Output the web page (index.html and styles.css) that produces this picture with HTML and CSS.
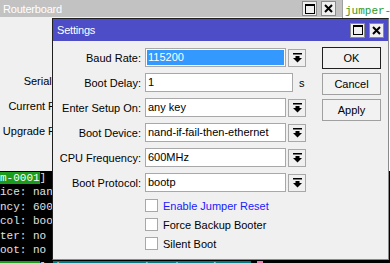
FILE: index.html
```html
<!DOCTYPE html>
<html lang="en">
<head>
  <meta charset="UTF-8">
  <meta name="viewport" content="width=device-width, initial-scale=1.0">
  <title>Settings</title>
  <link rel="stylesheet" href="styles.css">
</head>
<body>

  <div class="desktop">
    <div class="routerboard">
      <div class="titlebar inactive">
        <span class="title">Routerboard</span>
        <span class="title-buttons">
          <span class="win-button">
            <svg width="10" height="10" viewBox="0 0 10 10"><rect x="0.5" y="0.5" width="9" height="9" fill="none" stroke="#000"/><rect x="0" y="0" width="10" height="2"/></svg>
          </span>
          <span class="win-button">
            <svg width="9" height="9" viewBox="0 0 9 9"><path d="M1 1L8 8M8 1L1 8" stroke="#000" stroke-width="2"/></svg>
          </span>
        </span>
      </div>
      <div class="rb-body">
        <p class="rb-label">Serial Number:</p>
        <p class="rb-label">Current Firmware:</p>
        <p class="rb-label">Upgrade Firmware:</p>
      </div>
    </div>

    <div class="side-terminal">jumper-reset</div>

    <div class="terminal">
      <p class="line"><span class="prompt">m-0001</span>] /system routerboard settings print</p>
      <p class="line">ice: nand-if-fail-then-ethernet</p>
      <p class="line">ncy: 600MHz</p>
      <p class="line">col: bootp</p>
      <p class="line">ter: no</p>
      <p class="line">oot: no</p>
      <p class="line last"><span class="prompt">m-0001</span>] <span class="command">/system routerboard settings&gt; </span><span class="cursor">&nbsp;</span></p>
    </div>
  </div>

  <div class="dialog">
    <div class="titlebar active">
      <span class="title">Settings</span>
      <span class="title-buttons">
        <span class="win-button">
          <svg width="10" height="10" viewBox="0 0 10 10"><rect x="0.5" y="0.5" width="9" height="9" fill="none" stroke="#000"/><rect x="0" y="0" width="10" height="2"/></svg>
        </span>
        <span class="win-button">
          <svg width="9" height="9" viewBox="0 0 9 9"><path d="M1 1L8 8M8 1L1 8" stroke="#000" stroke-width="2"/></svg>
        </span>
      </span>
    </div>

    <div class="dialog-body">
      <div class="form">
        <div class="form-rows">
          <div class="form-row">
            <span class="label">Baud Rate:</span>
            <span class="field selected">115200</span>
            <span class="drop-button">
              <svg width="9" height="10" viewBox="0 0 9 10"><rect x="0" y="0" width="9" height="1.5"/><rect x="2.5" y="3" width="4" height="2.5"/><path d="M0 5h9L4.5 9.5z"/></svg>
            </span>
          </div>
          <div class="form-row">
            <span class="label">Boot Delay:</span>
            <span class="field wide">1</span>
            <span class="unit">s</span>
          </div>
          <div class="form-row">
            <span class="label">Enter Setup On:</span>
            <span class="field">any key</span>
            <span class="drop-button">
              <svg width="9" height="10" viewBox="0 0 9 10"><rect x="0" y="0" width="9" height="1.5"/><rect x="2.5" y="3" width="4" height="2.5"/><path d="M0 5h9L4.5 9.5z"/></svg>
            </span>
          </div>
          <div class="form-row">
            <span class="label">Boot Device:</span>
            <span class="field">nand-if-fail-then-ethernet</span>
            <span class="drop-button">
              <svg width="9" height="10" viewBox="0 0 9 10"><rect x="0" y="0" width="9" height="1.5"/><rect x="2.5" y="3" width="4" height="2.5"/><path d="M0 5h9L4.5 9.5z"/></svg>
            </span>
          </div>
          <div class="form-row">
            <span class="label">CPU Frequency:</span>
            <span class="field">600MHz</span>
            <span class="drop-button">
              <svg width="9" height="10" viewBox="0 0 9 10"><rect x="0" y="0" width="9" height="1.5"/><rect x="2.5" y="3" width="4" height="2.5"/><path d="M0 5h9L4.5 9.5z"/></svg>
            </span>
          </div>
          <div class="form-row">
            <span class="label">Boot Protocol:</span>
            <span class="field">bootp</span>
            <span class="drop-button">
              <svg width="9" height="10" viewBox="0 0 9 10"><rect x="0" y="0" width="9" height="1.5"/><rect x="2.5" y="3" width="4" height="2.5"/><path d="M0 5h9L4.5 9.5z"/></svg>
            </span>
          </div>
        </div>

        <div class="checks">
          <label class="check"><span class="box"></span><span class="check-text link">Enable Jumper Reset</span></label>
          <label class="check"><span class="box"></span><span class="check-text">Force Backup Booter</span></label>
          <label class="check"><span class="box"></span><span class="check-text">Silent Boot</span></label>
        </div>
      </div>

      <div class="buttons">
        <button class="dialog-button default">OK</button>
        <button class="dialog-button">Cancel</button>
        <button class="dialog-button">Apply</button>
      </div>
    </div>
  </div>

</body>
</html>
```

FILE: styles.css
```css
body {
  margin: 0;
  width: 390px;
  height: 263px;
  overflow: hidden;
  position: relative;
  font-family: "Liberation Sans", Arial, sans-serif;
  font-size: 11px;
  color: #000;
  background-color: #000;
}

p {
  margin: 0;
}

.desktop {
  display: grid;
  grid-template-columns: 343px 1fr;
  grid-template-rows: 171px 1fr;
  width: 390px;
  height: 263px;
}

/* window title bars */

.titlebar {
  display: flex;
  align-items: center;
  justify-content: space-between;
  color: white;
}

.titlebar.inactive {
  height: 17px;
  background-color: #c2c2c2;
  padding: 0 6px 0 3px;
}

.titlebar.active {
  height: 22px;
  background-color: #4d4dc8;
  padding: 0 4px 0 4px;
}

.title {
  font-size: 11px;
  letter-spacing: -0.2px;
}

.title-buttons {
  display: flex;
  gap: 4px;
}

.win-button {
  display: flex;
  align-items: center;
  justify-content: center;
  width: 13px;
  height: 13px;
  background-color: #f0f0f0;
  border: 1px solid #8c8c8c;
}

/* background windows */

.routerboard {
  background-color: #f0f0f0;
  border-right: 1px solid #a0a0a0;
}

.rb-body {
  padding-top: 52px;
}

.rb-label {
  width: 97px;
  height: 25px;
  line-height: 25px;
  text-align: right;
  white-space: nowrap;
}

.side-terminal {
  background-color: white;
  color: #2a9a2a;
  font-family: "Liberation Mono", monospace;
  font-size: 11px;
  padding: 5px 0 0 2px;
  white-space: nowrap;
  overflow: hidden;
}

.terminal {
  grid-column: 1 / 3;
  background-color: #000;
  color: #e0e0e0;
  font-family: "Liberation Mono", monospace;
  font-size: 11px;
  overflow: hidden;
}

.line {
  height: 14.4px;
  line-height: 14.4px;
  white-space: nowrap;
}

.line.last {
  margin-top: 3px;
}

.prompt {
  background-color: #1c9c1c;
  color: white;
}

.command {
  background-color: #007a80;
}

.cursor {
  background-color: #f07ab0;
  margin-left: 6px;
}

/* settings dialog */

.dialog {
  position: absolute;
  left: 52px;
  top: 18px;
  width: 337px;
  height: 242px;
  box-sizing: border-box;
  border: 1px solid #202020;
  border-right-color: #8a8a8a;
  border-bottom-color: #8a8a8a;
  background-color: #f0f0f0;
}

.dialog-body {
  display: flex;
  padding-top: 7px;
}

.form-rows {
  display: flex;
  flex-direction: column;
  gap: 6px;
}

.form-row {
  display: flex;
  align-items: center;
  height: 19px;
}

.label {
  width: 88px;
  margin-right: 4px;
  text-align: right;
  white-space: nowrap;
}

.field {
  box-sizing: border-box;
  width: 141px;
  height: 19px;
  line-height: 17px;
  padding-left: 2px;
  background-color: white;
  border: 1px solid #a8a8a8;
  white-space: nowrap;
  overflow: hidden;
}

.field.wide {
  width: 148px;
}

.field.selected {
  background-color: #3399ff;
  color: white;
  box-shadow: inset 0 0 0 1px white;
}

.unit {
  margin-left: 6px;
}

.drop-button {
  box-sizing: border-box;
  display: flex;
  align-items: center;
  justify-content: center;
  width: 18px;
  height: 18px;
  margin-left: 2px;
  background-color: #f0f0f0;
  border: 1px solid #a8a8a8;
}

.checks {
  display: flex;
  flex-direction: column;
  gap: 6px;
  margin-top: 7px;
  padding-left: 92px;
}

.check {
  display: flex;
  align-items: center;
  height: 13px;
}

.box {
  box-sizing: border-box;
  width: 13px;
  height: 13px;
  background-color: white;
  border: 1px solid #a8a8a8;
  margin-right: 5px;
}

.check-text.link {
  color: #1a1aff;
}

.buttons {
  display: flex;
  flex-direction: column;
  gap: 4px;
  margin-left: 16px;
  margin-top: -1px;
}

.dialog-button {
  width: 59px;
  height: 22px;
  background-color: #f2f2f2;
  border: 1px solid #a0a0a0;
  font-family: "Liberation Sans", Arial, sans-serif;
  font-size: 11px;
  color: #000;
  padding: 0;
}

.dialog-button.default {
  border-color: #202020;
}
```
